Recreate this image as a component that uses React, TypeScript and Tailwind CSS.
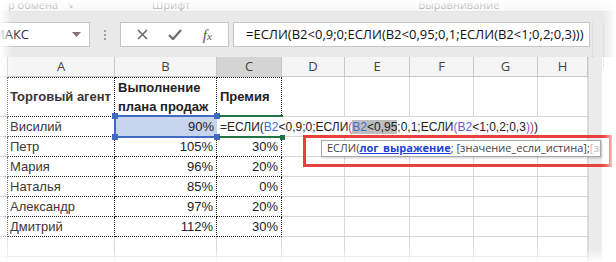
import React from 'react';

const COLS = 'grid-cols-[8px_107px_102px_65px_63px_65px_64px_64px_50px_14px_14px]';
const cellFont = { fontFamily: '"Liberation Sans", Arial, sans-serif' };
const uiFont = { fontFamily: '"Open Sans", "Noto Sans", sans-serif' };

const rows = [
  { name: 'Петр', plan: '105%', bonus: '30%' },
  { name: 'Мария', plan: '96%', bonus: '20%' },
  { name: 'Наталья', plan: '85%', bonus: '0%' },
  { name: 'Александр', plan: '97%', bonus: '20%' },
  { name: 'Дмитрий', plan: '112%', bonus: '30%' },
];

const grid = 'border-r border-b border-[#d9d9d9]';
const dotted = 'border-r border-b border-dotted border-[#222]';

function Handle({ className }: { className: string }) {
  return <span className={`absolute h-[6px] w-[6px] bg-[#3f6cc0] ${className}`} />;
}

function FormulaCell() {
  return (
    <span className="whitespace-nowrap text-[12px] text-[#222]">
      =ЕСЛИ(<span className="text-[#3a6fd0]">B2</span>&lt;0,9;0;ЕСЛИ<span className="text-[#e0306a]">(</span>
      <span className="bg-[#bdbdbd]">
        <span className="text-[#3a6fd0]">B2</span>&lt;0,95
      </span>
      ;0,1;ЕСЛИ<span className="text-[#8a5cc8]">(</span>
      <span className="text-[#5a62d8]">B2</span>&lt;1;0,2;0,3<span className="text-[#8a5cc8]">)</span>
      <span className="text-[#e0306a]">)</span>)
    </span>
  );
}

export default function App() {
  return (
    <div className="relative h-[262px] w-[616px] overflow-hidden bg-white" style={cellFont}>
      {/* ribbon group labels */}
      <div className="flex h-[12px] items-end overflow-hidden border-b border-[#e2e2e2] bg-[#f7f7f7] text-[11px] leading-[12px] text-[#9a9a9a]" style={uiFont}>
        <span className="ml-[8px] -mt-[3px]">р обмена</span>
        <span className="ml-[8px] -mt-[3px] text-[9px]">↘</span>
        <span className="ml-[78px] -mt-[3px]">Шрифт</span>
        <span className="ml-[228px] -mt-[3px]">Выравнивание</span>
      </div>

      {/* formula bar */}
      <div className="flex h-[45px] items-start bg-[#e9e9e9] pt-[10px]" style={uiFont}>
        <div className="flex h-[25px] w-[90px] items-center justify-between overflow-hidden border border-l-0 border-[#c6c6c6] bg-white pr-[8px]">
          <span className="-ml-[7px] text-[13px] text-[#333]">МАКС</span>
          <svg width="9" height="5" viewBox="0 0 9 5">
            <path d="M0 0h9L4.5 5z" fill="#8a6a7f" />
          </svg>
        </div>
        <div className="flex h-[25px] w-[30px] flex-col items-center justify-center gap-[2px]">
          <span className="h-[2px] w-[2px] bg-[#a0a0a0]" />
          <span className="h-[2px] w-[2px] bg-[#a0a0a0]" />
          <span className="h-[2px] w-[2px] bg-[#a0a0a0]" />
        </div>
        <div className="flex h-[25px] w-[109px] items-center justify-around border border-[#c6c6c6] bg-white px-[6px]">
          <svg width="11" height="11" viewBox="0 0 11 11">
            <path d="M1 1l9 9M10 1l-9 9" stroke="#6b6b6b" strokeWidth="1.6" />
          </svg>
          <svg width="14" height="11" viewBox="0 0 14 11">
            <path d="M1 6l4 4 8-9" stroke="#6b6b6b" strokeWidth="2.2" fill="none" />
          </svg>
          <span className="italic text-[#555]" style={{ fontFamily: '"Liberation Serif", serif' }}>
            <span className="text-[15px]">f</span>
            <span className="text-[11px]">x</span>
          </span>
        </div>
        <div className="ml-[4px] flex h-[25px] w-[357px] items-center whitespace-nowrap border border-[#c6c6c6] bg-white pl-[12px] text-[13px] text-[#111]">
          =ЕСЛИ(B2&lt;0,9;0;ЕСЛИ(B2&lt;0,95;0,1;ЕСЛИ(B2&lt;1;0,2;0,3)))
        </div>
        <div className="ml-[2px] h-[45px] w-[12px] border-x border-dotted border-[#d0d0d0]" />
      </div>

      {/* sheet */}
      <div className={`grid ${COLS} grid-rows-[20px_40px_20px_20px_20px_20px_20px_20px_20px_20px]`}>
        {/* column headers */}
        <div className="border-r border-b border-[#c8c8c8] bg-[#f5f5f5]" />
        {['A', 'B', 'C', 'D', 'E', 'F', 'G', 'H'].map((l) => (
          <div
            key={l}
            className={`flex items-center justify-center border-r border-b border-[#c8c8c8] text-[13px] text-[#444] ${
              l === 'C' ? 'bg-[#d4d4d4]' : 'bg-[#f5f5f5]'
            }`}
            style={uiFont}
          >
            {l}
          </div>
        ))}
        <div className="border-l border-dotted border-[#cfcfcf] bg-[#ececec]" />
        <div />

        {/* row 1 */}
        <div className={dotted} />
        <div className={`${dotted} flex items-center border-t pl-[2px] text-[13px] font-bold text-[#3e3434]`}>Торговый агент</div>
        <div className={`${dotted} flex flex-col justify-center border-t pl-[3px] text-[13px] font-bold leading-[19px] text-[#222]`}>
          <span>Выполнение</span>
          <span>плана продаж</span>
        </div>
        <div className={`${dotted} flex items-center border-t pl-[3px] text-[13px] font-bold text-[#222]`}>Премия</div>
        {[0, 1, 2, 3, 4].map((i) => (
          <div key={i} className={grid} />
        ))}
        <div className="border-l border-dotted border-[#cfcfcf] bg-[#ececec]" />
        <div />

        {/* row 2 */}
        <div className={dotted} />
        <div className={`${dotted} flex items-center pl-[2px] text-[13px] text-[#3e3434]`}>Висилий</div>
        <div className="relative flex items-center justify-end bg-[#c7d5ee] pr-[3px] text-[13px] text-[#222]">
          90%
          <div className="absolute -left-px -top-[2px] -right-px -bottom-[1px] border-y-[2px] border-l-[2px] border-[#3f6cc0]" />
          <Handle className="-left-[3px] -top-[4px]" />
          <Handle className="-right-[3px] -top-[4px]" />
          <Handle className="-left-[3px] -bottom-[3px]" />
          <Handle className="-right-[3px] -bottom-[3px]" />
        </div>
        <div className="relative z-10 flex items-center pl-[3px]">
          <FormulaCell />
          <div className="absolute left-[2px] -top-[2px] -right-px -bottom-[1px] border-y-[2px] border-[#217346]" />
          <span className="absolute -right-[3px] -bottom-[3px] h-[5px] w-[5px] bg-[#217346]" />
        </div>
        <div className="border-b border-[#d9d9d9]" />
        <div className="border-b border-[#d9d9d9]" />
        <div className="border-b border-[#d9d9d9]" />
        <div className="border-b border-[#d9d9d9]" />
        <div className={grid} />
        <div className="border-l border-dotted border-[#cfcfcf] bg-[#ececec]" />
        <div />

        {/* data rows */}
        {rows.map((r) => (
          <React.Fragment key={r.name}>
            <div className={dotted} />
            <div className={`${dotted} flex items-center pl-[2px] text-[13px] text-[#3e3434]`}>{r.name}</div>
            <div className={`${dotted} flex items-center justify-end pr-[3px] text-[13px] text-[#222]`}>{r.plan}</div>
            <div className={`${dotted} flex items-center justify-end pr-[3px] text-[13px] text-[#222]`}>{r.bonus}</div>
            {[0, 1, 2, 3, 4].map((i) => (
              <div key={i} className={grid} />
            ))}
            <div className="border-l border-dotted border-[#cfcfcf] bg-[#ececec]" />
            <div />
          </React.Fragment>
        ))}

        {/* empty rows */}
        {[0, 1].map((k) => (
          <React.Fragment key={k}>
            {[0, 1, 2, 3, 4, 5, 6, 7, 8].map((i) => (
              <div key={i} className={grid} />
            ))}
            <div className="border-l border-dotted border-[#cfcfcf] bg-[#ececec]" />
            <div />
          </React.Fragment>
        ))}
      </div>

      {/* function tooltip */}
      <div
        className="absolute left-[321px] top-[140px] flex h-[17px] w-[280px] items-center overflow-hidden whitespace-nowrap border border-[#a8a8a8] bg-white pl-[5px] text-[11px] text-[#444] shadow-[1px_1px_2px_rgba(0,0,0,0.2)]"
        style={uiFont}
      >
        ЕСЛИ(<span className="font-bold text-[#1f3fd8] underline">лог_выражение</span>; [значение_если_истина];{' '}
        <span className="text-[#bbb]">[значение</span>
      </div>

      {/* red highlight frame */}
      <div className="absolute left-[303px] top-[135px] h-[32px] w-[309px] border-[3px] border-[#e8403c]" />

      {/* soft faded edges */}
      <div className="pointer-events-none absolute inset-0 shadow-[inset_0_0_10px_6px_#fff]" />
    </div>
  );
}
